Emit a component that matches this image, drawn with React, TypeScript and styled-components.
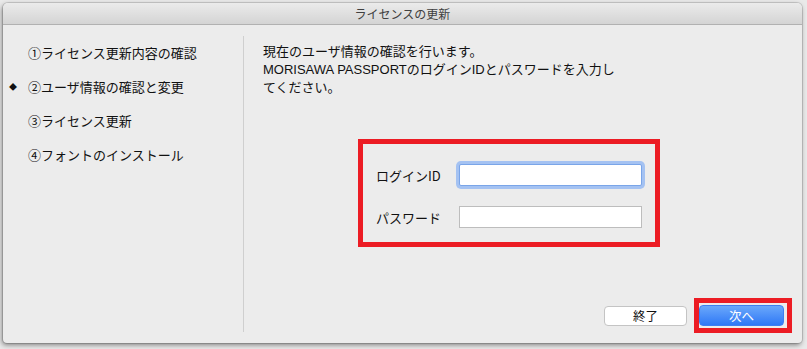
import React from "react";
import styled, { createGlobalStyle } from "styled-components";

const Global = createGlobalStyle`
  html, body { margin: 0; padding: 0; }
  body {
    width: 807px;
    height: 349px;
    overflow: hidden;
    background: #e9e9e9;
    font-family: "Liberation Sans", "Noto Sans CJK JP", sans-serif;
  }
`;

const Page = styled.div`
  width: 807px;
  height: 349px;
  box-sizing: border-box;
  padding: 3px 5px 6px 3px;
  display: flex;
`;

const Window = styled.div`
  flex: 1;
  display: flex;
  flex-direction: column;
  background: #ececec;
  border-radius: 5px 5px 4px 4px;
  box-shadow: 0 0 0 1px rgba(0, 0, 0, 0.12), -1px 2px 5px rgba(0, 0, 0, 0.45);
  overflow: hidden;
`;

const TitleBar = styled.div`
  height: 21px;
  flex: none;
  display: flex;
  align-items: center;
  justify-content: center;
  background: linear-gradient(#ebebeb, #d4d4d4);
  border-bottom: 1px solid #b1b1b1;
  font-family: "Noto Sans CJK JP", sans-serif;
  font-size: 12px;
  color: #404040;
`;

const Body = styled.div`
  flex: 1;
  display: flex;
  min-height: 0;
`;

const Sidebar = styled.ul`
  width: 240px;
  flex: none;
  margin: 0;
  padding: 18px 0 0 6px;
  box-sizing: border-box;
  list-style: none;
  display: flex;
  flex-direction: column;
  gap: 16.3px;
`;

const Step = styled.li`
  display: flex;
  align-items: center;
  height: 18px;
  font-family: "Noto Sans CJK JP", sans-serif;
  font-size: 13px;
  color: #111;
`;

const Marker = styled.span`
  width: 19px;
  flex: none;
  font-size: 8px;
  color: #111;
`;

const Divider = styled.div`
  width: 1px;
  flex: none;
  background: #cfcfcf;
  margin: 11px 0 11px;
`;

const Main = styled.div`
  flex: 1;
  display: flex;
  flex-direction: column;
  padding: 18px 10px 10px 19px;
`;

const Intro = styled.p`
  margin: 0;
  font-size: 13px;
  line-height: 18px;
  color: #111;
  font-family: "Liberation Sans", "Noto Sans CJK JP", sans-serif;
`;

const Highlight = styled.div`
  border: 5px solid #ec1c24;
  box-sizing: border-box;
`;

const FormBox = styled(Highlight)`
  width: 302px;
  height: 108px;
  margin: 42px 0 0 95px;
  display: grid;
  grid-template-columns: 84px 1fr;
  grid-auto-rows: 22px;
  row-gap: 20px;
  align-items: center;
  padding: 20px 14px 0 13px;
`;

const Label = styled.label`
  font-family: "Noto Sans CJK JP", sans-serif;
  font-size: 13px;
  color: #111;
`;

const Input = styled.input<{ $focused?: boolean }>`
  box-sizing: border-box;
  height: 22px;
  width: 183px;
  margin-left: -1px;
  background: #fff;
  border: 1px solid ${(p) => (p.$focused ? "#7aa5e8" : "#bdbdbd")};
  box-shadow: ${(p) => (p.$focused ? "0 0 0 3px #a4c2f2" : "none")};
  border-radius: ${(p) => (p.$focused ? "2px" : "0")};
  outline: none;
  padding: 0 4px;
  font-size: 13px;
`;

const Footer = styled.div`
  margin-top: auto;
  display: flex;
  justify-content: flex-end;
  align-items: center;
  gap: 7px;
`;

const Button = styled.button<{ $primary?: boolean }>`
  box-sizing: border-box;
  height: ${(p) => (p.$primary ? "21px" : "20px")};
  width: ${(p) => (p.$primary ? "85px" : "83px")};
  border-radius: 4px;
  font-family: "Noto Sans CJK JP", sans-serif;
  font-size: 12.5px;
  padding: 0;
  display: flex;
  align-items: center;
  justify-content: center;
  border: 1px solid ${(p) => (p.$primary ? "#3f7ef0" : "#c4c4c4")};
  color: ${(p) => (p.$primary ? "#fff" : "#111")};
  background: ${(p) =>
    p.$primary ? "linear-gradient(#6aa8fb, #2f78f6)" : "#fff"};
`;

const NextBox = styled(Highlight)`
  width: 98px;
  height: 35px;
  display: flex;
  align-items: center;
`;

export default function App() {
  const steps = [
    "①ライセンス更新内容の確認",
    "②ユーザ情報の確認と変更",
    "③ライセンス更新",
    "④フォントのインストール",
  ];
  return (
    <>
      <Global />
      <Page>
        <Window>
          <TitleBar>ライセンスの更新</TitleBar>
          <Body>
            <Sidebar>
              {steps.map((s, i) => (
                <Step key={s}>
                  <Marker>{i === 1 ? "◆" : ""}</Marker>
                  {s}
                </Step>
              ))}
            </Sidebar>
            <Divider />
            <Main>
              <Intro>
                現在のユーザ情報の確認を行います。
                <br />
                MORISAWA PASSPORTのログインIDとパスワードを入力し
                <br />
                てください。
              </Intro>
              <FormBox>
                <Label>ログインID</Label>
                <Input $focused />
                <Label>パスワード</Label>
                <Input type="password" />
              </FormBox>
              <Footer>
                <Button>終了</Button>
                <NextBox>
                  <Button $primary>次へ</Button>
                </NextBox>
              </Footer>
            </Main>
          </Body>
        </Window>
      </Page>
    </>
  );
}
